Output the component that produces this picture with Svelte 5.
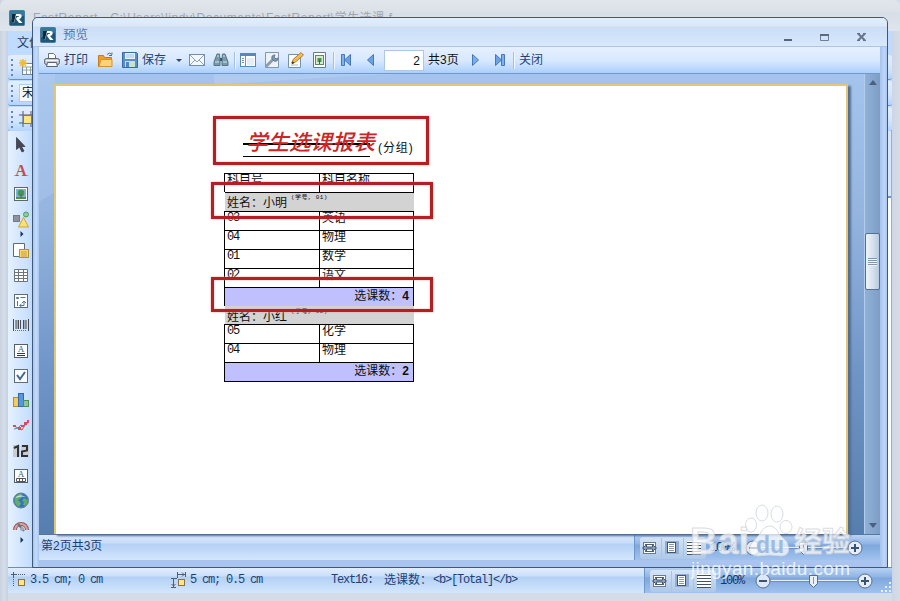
<script>
  const tools = ['pointer', 'letter', 'picture', 'shapes', 'more', 'subreport', 'grid', 'matrix', 'barcode', 'richtext', 'check', 'chart', 'spark', 'digits', 'cellular', 'globe', 'gauge', 'more'];

  const rows = [
    { kind: 'cells', a: '科目号', b: '科目名称' },
    { kind: 'group', name: '小明', no: '01' },
    { kind: 'cells', a: '03', b: '英语' },
    { kind: 'cells', a: '04', b: '物理' },
    { kind: 'cells', a: '01', b: '数学' },
    { kind: 'cells', a: '02', b: '语文' },
    { kind: 'total', n: '4' },
    { kind: 'group', name: '小红', no: '02' },
    { kind: 'cells', a: '05', b: '化学' },
    { kind: 'cells', a: '04', b: '物理' },
    { kind: 'total', n: '2' }
  ];
</script>

{#snippet icon(name)}
  <svg class="ic {name}" width="16" height="16" viewBox="0 0 16 16" fill="none">
    {#if name === 'logo'}
      <rect x=".5" y=".5" width="15" height="15" rx="1" fill="#1d5878" stroke="#4b7c9b" />
      <path d="M1 1h14v5Q7 4 1 11z" fill="#408daa" opacity=".65" />
      <path d="M4 4h6q3.500 0 2.500 2.900Q11.800 8.700 10 9L13.500 13H10L7 9 8 7h1.500q1-1-.2-1H7L5.200 12.500H3.400z" fill="#fff" />
      <path d="M3 4h4L5 12.500H3z" fill="#10283a" />
    {:else if name === 'print'}
      <path d="M4.500 7V1.500h5l2 2V7" fill="#fff" stroke="#67717c" />
      <rect x=".5" y="6.500" width="15" height="6" rx="2" fill="#c4c9d1" stroke="#5c6570" />
      <path d="M2 8.500h12" stroke="#f4f6f8" /><path d="M3.500 10.500h9l1 4h-11z" fill="#f5f8fc" stroke="#59626d" />
    {:else if name === 'folder'}
      <path d="M.5 14.500V3.500h5l1 2h7v9z" fill="#e8a02e" stroke="#c77b19" /><path d="M1 14.500l2-7h11v7z" fill="#fbd477" stroke="#d6912b" />
      <path d="M9 2.500q2-3 5 0V.5m0 3h-3" stroke="#5b6f82" />
    {:else if name === 'save'}
      <path d="M.5 .5h14l1 1v14H.5z" fill="#5a8fcb" stroke="#3a6aa5" /><rect x="3" y="1" width="10" height="6" fill="#e6f1fc" />
      <path d="M4 3h8M4 5h8" stroke="#a7c3e0" /><rect x="3" y="9" width="10" height="6" fill="#c9e3c9" /><rect x="4" y="10" width="3" height="5" fill="#4d87bf" />
    {:else if name === 'mail'}
      <rect x=".5" y="2.500" width="15" height="11" fill="#f4f8fc" stroke="#748fae" /><path d="M1 3l7 7 7-7M1 13l5-5M15 13l-5-5" stroke="#8ba2bb" />
    {:else if name === 'find'}
      <path d="M4 2h2.500l.5 5v6.500H1V10zM12 2H9.500L9 7v6.500h6V10z" fill="#789aa9" stroke="#557586" />
      <path d="M7 6h2v3H7z" fill="#38586b" /><path d="M2 10h4M10 10h4M4 4h2M10 4h2" stroke="#d5e6ed" />
    {:else if name === 'outline'}
      <rect x=".5" y="1.500" width="15" height="13" fill="#fff" stroke="#5a88b8" /><path d="M1 3h14" stroke="#5a88b8" stroke-width="2" /><path d="M5.500 4v10M2 6.500h2M2 8.500h2M2 10.500h2" stroke="#7190b2" /><path d="M7 6h7v7H7z" fill="#e4edf8" />
    {:else if name === 'setup'}
      <path d="M1.500 .5h13v15h-13z" fill="#edf2f7" stroke="#8197ae" /><path d="M3 13.500l6-6" stroke="#8b9dae" stroke-width="3" stroke-linecap="round" /><path d="M8 7q-1-4 3-4L10 5l2 2 2-1q0 4-4 3z" fill="#8599ad" stroke="#637890" />
    {:else if name === 'edit'}
      <path d="M.5 2.500h12v13H.5z" fill="#fff" stroke="#7391a9" /><path d="M3 13h7" stroke="#a6bed0" /><path d="M4 11.500l1-4 8-7 2.500 2.500-8 7z" fill="#f1bc54" stroke="#b97d2c" /><path d="M4 11.500l1.500-1.500" stroke="#44382c" stroke-width="2" />
    {:else if name === 'margins'}
      <path d="M1.500 .5h12v15h-12z" fill="#fff" stroke="#648076" /><rect x="3.500" y="3.500" width="8" height="9" fill="#d9ead4" stroke="#5b876d" /><path d="M5.500 10V6h4v4z" fill="#4e9253" /><path d="M7.500 8v4" stroke="#5e583b" />
    {:else if name === 'first' || name === 'last'}
      <g transform={name === 'last' ? 'translate(16 0) scale(-1 1)' : ''}><path d="M2.500 2.500h3v11h-3z" fill="#80b1ed" stroke="#4677b9" /><path d="M11.500 2.500v11L5.500 8z" fill="#6ba2e6" stroke="#4677b9" /></g>
    {:else if name === 'prev'}
      <path d="M11.500 2.500v11L5.500 8z" fill="#6ba2e6" stroke="#4677b9" />
    {:else if name === 'next'}
      <path d="M4.500 2.500v11l6-5.500z" fill="#7aaeea" stroke="#4677b9" />
    {:else if name === 'newreport'}
      <rect x="3.500" y="4.500" width="12" height="11" fill="#fff" stroke="#7187a1" /><path d="M4 8h12M4 11h12M7.500 8v7M11.500 8v7" stroke="#8da39c" /><path d="M4 0v8M0 4h8M1 1l6 6M7 1L1 7" stroke="#f2bb32" stroke-width="1.500" />
    {:else if name === 'align'}
      <path d="M4 0v16M12 0v16M0 4h16M0 12h16" stroke="#4e5866" /><rect x="4.500" y="4.500" width="8" height="8" fill="#ffe680" stroke="#a07722" />
    {:else if name === 'pointer'}
      <path d="M3.500 .5v12l3-2.500L9 15l2-1L8.500 9.500H12z" fill="#454852" stroke="#30323a" stroke-width=".7" />
    {:else if name === 'letter'}
      <path d="M1 13.500h5M9.500 13.500h6" stroke="#c9686f" opacity=".6" /><text x="8" y="14" text-anchor="middle" class="bigA">A</text>
    {:else if name === 'picture'}
      <rect x="1.500" y=".5" width="13" height="13" fill="#fff" stroke="#5c6670" /><rect x="3" y="2" width="10" height="10" fill="#75b5de" /><path d="M3 10h10v2H3z" fill="#569245" /><circle cx="8" cy="6" r="3.300" fill="#45974f" /><path d="M8 7v4" stroke="#7a5931" />
    {:else if name === 'shapes'}
      <rect x=".5" y="3.500" width="6" height="6" fill="#8e939b" stroke="#747982" /><circle cx="13" cy="2.500" r="2.500" fill="#91cd98" stroke="#4e9c60" /><path d="M10.500 5.500L15.500 15h-10z" fill="#ffdf77" stroke="#d1a33b" />
    {:else if name === 'more'}
      <path d="M7.500 4v6l3-3z" fill="#16355f" />
    {:else if name === 'subreport'}
      <path d="M.5 .5h11v13H.5z" fill="#fff" stroke="#626a73" /><rect x="6.500" y="6.500" width="9" height="8" fill="#fbd971" stroke="#b78e34" /><path d="M8 9h6M8 11h6M8 13h6" stroke="#a98435" stroke-width=".7" />
    {:else if name === 'grid'}
      <path d="M1.500 1.500h13v12h-13z" fill="#fff" stroke="#6c747e" /><path d="M5.500 2v11M10.500 2v11M1 4.500h13M1 7.500h13M1 10.500h13" stroke="#6c747e" />
    {:else if name === 'matrix'}
      <rect x="1.500" y="1.500" width="13" height="13" fill="#fff" stroke="#606b77" /><path d="M3.500 4.500h2v1h-2zM7.500 4.500h5M4.500 8v5M7 12.500h4V8M9 10l2-2 2 2M8.500 11l-2 1.500 2 1.500" stroke="#4d799a" />
    {:else if name === 'barcode'}
      <path d="M.5 1v12M3 2v9M5.500 2v9M7.500 2v9M10.500 2v9M13 2v9M15.500 1v12" stroke="#484d54" /><path d="M4 2v9M12 2v9" stroke="#70777f" /><path d="M2 12.500h12" stroke="#6b727a" stroke-dasharray="1 1" />
    {:else if name === 'richtext' || name === 'cellular'}
      <rect x="1.500" y="1.500" width="13" height="13" fill="#fff" stroke="#555e69" /><text x="8" y="9" text-anchor="middle" class="smallA">A</text>
      {#if name === 'richtext'}<path d="M4 10.500h8M4 12.500h8" stroke="#33383f" />{:else}<path d="M3.500 10.500h9v3h-9zM6.500 10v3M9.500 10v3" stroke="#50565d" />{/if}
    {:else if name === 'check'}
      <rect x="1.500" y="1.500" width="13" height="13" fill="#f8fafc" stroke="#626d78" /><path d="M4 7l3 4 5-7" stroke="#476790" stroke-width="2" />
    {:else if name === 'chart'}
      <rect x=".5" y="4.500" width="5" height="9" fill="#f9cc56" stroke="#bf8925" /><rect x="5.500" y=".5" width="5" height="13" fill="#5797dc" stroke="#3469a7" /><rect x="10.500" y="7.500" width="5" height="6" fill="#90c695" stroke="#4e8f59" />
    {:else if name === 'spark'}
      <path d="M1 11l4-1 3-3 3 2 4-6" stroke="#558aca" /><path d="M1 8l4 2 4 2 3-6 3-1" stroke="#d54e56" /><path d="M0 7h3v2H0zM5 9h3v3H5zM8 7h3v2H8zM11 4h3v3h-3zM14 2h2v3h-2z" fill="#d54e56" />
    {:else if name === 'digits'}
      <path d="M0 2h7v12H0zM8 2h8v12H8z" fill="#c9ccd0" /><path d="M1 5l4-2v11M9 3h5v4.500l-5 1V13h6" stroke="#303134" stroke-width="2" />
    {:else if name === 'globe'}
      <circle cx="8" cy="7.500" r="7.500" fill="#3374bd" stroke="#6c8494" /><path d="M2 4q4-4 7-3L8 5 5 7l3 3-2 4Q0 11 2 4M11 5l4 2-2 6-3-1 1-3-2-1z" fill="#62ac70" /><path d="M2 5q4-5 11-1Q8 3 2 5" fill="#fff" opacity=".65" />
    {:else if name === 'gauge'}
      <path d="M2 12a6 6 0 1 1 12 0" stroke="#8e5b60" stroke-width="4" /><path d="M2 12a6 6 0 1 1 12 0" stroke="#e0a09b" stroke-width="2" /><path d="M5 6l6 7" stroke="#68717d" stroke-width="2" /><circle cx="9" cy="11" r="2" fill="#a2a9b2" />
    {:else if name === 'pos'}
      <path d="M2.500 0v6M0 2.500h6" stroke="#555d69" /><path d="M7 2.500h8M2.500 7v8" stroke="#555d69" stroke-dasharray="1 1" /><rect x="7.500" y="7.500" width="6" height="6" fill="#ffe680" stroke="#87724b" />
    {:else if name === 'size'}
      <path d="M6.500 0v6M14.500 0v5M7 2.500h7M11 .5l2 2-2 2M0 6.500h6M2.500 7v8M.5 12l2 2 2-2M0 15.500h5" stroke="#555d69" /><rect x="7.500" y="7.500" width="6" height="6" fill="#ffe680" stroke="#87724b" />
    {/if}
  </svg>
{/snippet}

{#snippet zoomPanel()}
  <div class="zoom">
    <div class="views">
      <svg width="66" height="22" viewBox="0 0 66 22" fill="none">
        <path d="M21.500 1v20M43.500 1v20" stroke="#a9c3e3" />
        <rect x="3.500" y="5.500" width="12" height="11" fill="#fff" stroke="#647b96" /><path d="M5 7.500h9M5 14.500h9" stroke="#4c5e75" /><path d="M2.500 11l4-3v2h6V8l4 3-4 3v-2h-6v2z" fill="#8ea5c0" stroke="#40536b" />
        <path d="M25 4h14v13H25z" fill="#92aed3" /><rect x="27.500" y="5.500" width="8" height="10" fill="#fff" stroke="#42576f" /><path d="M29 7.500h5M29 9.500h5M29 11.500h5M29 13.500h5" stroke="#8796ac" />
        <path d="M47 4h14v14H47z" fill="#fff" /><path d="M47 5.500h14M47 8.500h14M47 11.500h14M47 14.500h14M47 17.500h14" stroke="#3f526a" />
      </svg>
    </div>
    <span class="pct">100%</span>
    <svg class="slider" width="122" height="20" viewBox="0 0 122 20" fill="none">
      <path d="M18 9.500h86" stroke="#e5f0ff" /><path d="M18 10.500h86" stroke="#6c8fbe" />
      <circle cx="10" cy="10" r="7" fill="#dce8f6" stroke="#547095" /><path d="M6 10h8" stroke="#3b5373" stroke-width="2" />
      <path d="M56.500 4.500h8v8l-4 4-4-4z" fill="#e8f1fb" stroke="#526e93" /><path d="M60.500 6v7" stroke="#8098b7" />
      <circle cx="112" cy="10" r="7" fill="#e4edf8" stroke="#547095" /><path d="M108 10h8M112 6v8" stroke="#3b5373" stroke-width="2" />
    </svg>
  </div>
{/snippet}

<div class="desktop">
  <header class="outer-title">{@render icon('logo')}<span>FastReport - C:\Users\lindy\Documents\FastReport\学生选课.f</span></header>
  <main class="outer-body">
    <div class="bars">
      <div class="menu">文件</div>
      <div class="bar"><i></i>{@render icon('newreport')}</div>
      <div class="bar"><i></i><b>宋体</b></div>
      <div class="bar"><i></i>{@render icon('align')}</div>
    </div>
    <div class="middle">
      <nav>{#each tools as t}<div class="tool" class:small={t === 'more'}>{@render icon(t)}</div>{/each}</nav>
      <div class="canvas"></div>
    </div>
  </main>
  <footer class="outer-status">
    <div class="where">{@render icon('pos')}<span class="mono">3.5 cm; 0 cm</span></div>
    <div class="where">{@render icon('size')}<span class="mono">5 cm; 0.5 cm</span></div>
    <div class="sel"><span class="mono">Text16:</span><span class="cn">选课数：</span><span class="mono">&lt;b&gt;[Total]&lt;/b&gt;</span></div>
    {@render zoomPanel()}
    <svg class="grip" width="12" height="12" viewBox="0 0 12 12"><path d="M9 1h2v2H9zM5 5h2v2H5zM9 5h2v2H9zM1 9h2v2H1zM5 9h2v2H5zM9 9h2v2H9z" fill="#e8f2ff" /></svg>
  </footer>

  <section class="window">
    <header class="win-title">
      {@render icon('logo')}<span>预览</span>
      <svg class="controls" width="84" height="14" viewBox="0 0 84 14" fill="none"><path d="M0 11h8" stroke="#566579" stroke-width="2" /><path d="M36.500 5.500h8v6h-8z" stroke="#6c7d94" /><path d="M36 6h9" stroke="#5b6a7e" stroke-width="2" /><path d="M74 4.500l7 7M81 4.500l-7 7" stroke="#66758b" stroke-width="2" /><path d="M73 4.500h3M79 4.500h3M73 11.500h3M79 11.500h3" stroke="#66758b" /></svg>
    </header>
    <div class="win-body">
      <div class="toolbar">
        {@render icon('print')}<span class="label">打印</span>
        {@render icon('folder')}{@render icon('save')}<span class="label">保存</span><u></u>
        {@render icon('mail')}{@render icon('find')}<s></s>
        {@render icon('outline')}{@render icon('setup')}{@render icon('edit')}{@render icon('margins')}<s></s>
        {@render icon('first')}{@render icon('prev')}
        <div class="page-no">2</div><span class="of">共3页</span>
        {@render icon('next')}{@render icon('last')}<s class="endsep"></s><span class="label">关闭</span>
      </div>
      <div class="workspace">
        <svg class="swoosh" viewBox="0 0 825 460" preserveAspectRatio="none"><path d="M0 0H240Q130 10 0 45z" transform="translate(175 -2) scale(1 .3)" fill="#b8d1f2" opacity=".5" /><path d="M0 0H16V118L0 128z" fill="#b8d1f2" opacity=".3" /></svg>
        <article class="page">
          <div class="heading"><h1>学生选课报表</h1><span>(分组)</span></div>
          <div class="table">
            {#each rows as r}
              {#if r.kind === 'cells'}
                <div class="row"><span class:num={r.a.length === 2}>{r.a}</span><span>{r.b}</span></div>
              {:else if r.kind === 'group'}
                <div class="group"><span>姓名：{r.name}</span><sup>(学号, {r.no})</sup></div>
              {:else}
                <div class="total">选课数：<b>{r.n}</b></div>
              {/if}
            {/each}
          </div>
          <div class="mark m1"></div><div class="mark m2"></div><div class="mark m3"></div>
        </article>
        <div class="scroll"><em class="up"></em><div class="thumb"><i></i></div><em class="down"></em></div>
      </div>
      <div class="win-status"><span>第2页共3页</span>{@render zoomPanel()}</div>
    </div>
  </section>

  <svg class="watermark" width="170" height="84" viewBox="0 0 170 84">
    <g fill="#fff" fill-opacity=".72" stroke="#d0d4da" stroke-opacity=".8">
      <ellipse cx="72" cy="13" rx="6" ry="8" /><ellipse cx="87" cy="14" rx="6" ry="8" />
      <ellipse cx="61" cy="25" rx="5.500" ry="7" /><ellipse cx="96" cy="27" rx="6" ry="6.500" />
      <path d="M79 26Q86 26 89 34L97 42Q102 55 92 56L79 55 68 56Q56 56 61 44L70 34Q73 27 79 26z" />
      <text x="0" y="54" class="bai" textLength="59" lengthAdjust="spacingAndGlyphs">Bai</text><text x="104" y="52" class="jy" textLength="56" lengthAdjust="spacingAndGlyphs">经验</text>
    </g>
    <text x="66" y="53" class="du">du</text>
    <text x="1" y="75" class="url" textLength="159">jingyan.baidu.com</text>
  </svg>
</div>

<style>
  :global(body) { margin: 0; overflow: hidden; }
  * { box-sizing: border-box; }
  .desktop { position: relative; width: 900px; height: 601px; display: flex; flex-direction: column; background: linear-gradient(90deg, #c9d3df, #d5dde9 4px, #c6d2e3 8px, #c6d2e3 890px, #cfd7e5 893px, #d6dde8); font: 12px/14px "Liberation Sans", "Noto Sans CJK SC", sans-serif; color: #1b3f78; }
  .ic { display: block; flex: none; overflow: visible; }
  .mono { font-family: "Liberation Mono", monospace; letter-spacing: -1.2px; white-space: pre; }
  .outer-title { height: 31px; display: flex; padding: 10px 0 0 9px; border-radius: 6px 6px 0 0; background: linear-gradient(#e1e6ec, #dce1e8 12px, #d7dee7 13px, #dfe5ec); }
  .outer-title span { margin: 0 0 0 8px; line-height: 17px; color: #a0a7b0; letter-spacing: .55px; white-space: nowrap; }
  .outer-body { flex: 1; margin: 0 8px; display: flex; flex-direction: column; background: #bfdbff; min-height: 0; }
  .bars { height: 100px; }
  .menu { height: 24px; padding: 5px 0 0 9px; color: #263d5e; }
  .bar { height: 25px; margin-bottom: 1px; border-bottom: 1px solid #6593cf; border-radius: 3px; background: linear-gradient(#e4efff, #d1e4ff 60%, #b5d3fc); display: flex; align-items: center; gap: 6px; padding-left: 3px; }
  .bar i { width: 2px; height: 17px; background: repeating-linear-gradient(#6788b6 0 2px, transparent 2px 5px); }
  .bar b { font-weight: 400; color: #111; border: 1px solid #b5cbe6; background: #f5f9ff; padding: 1px 2px; width: 60px; }
  .middle { flex: 1; display: flex; min-height: 0; }
  nav { width: 24px; padding: 1px 0 0 5px; background: linear-gradient(90deg, #e5f1ff, #c3dcfc); }
  .tool { height: 25px; display: flex; align-items: center; }
  .tool.small { height: 6px; }
  .bigA { font: bold 16px "Liberation Serif", serif; fill: #c54c55; }
  .smallA { font: 9px "Liberation Serif", serif; fill: #345e8a; }
  .canvas { flex: 1; background: linear-gradient(90deg, transparent 859px, #8fb1dc 859px), linear-gradient(#d8e8fc 65px, #6d94c4 65px 67px, #fdfefe 67px); }
  .outer-status { height: 34px; padding: 0 0 8px; margin: 0 8px; border-top: 1px solid #6c8fae; display: flex; background: linear-gradient(#e3edfc, #cadffa 8px, #b3d0f5 9px, #d4e6fd 25px, #d4dce8 25px); position: relative; }
  .where { display: flex; gap: 3px; padding: 4px 0 0 3px; width: 160px; line-height: 16px; }
  .sel { flex: 1; display: flex; line-height: 24px; white-space: nowrap; padding-left: 3px; }
  .cn { margin: 0 1px 0 11px; }
  .zoom { width: 248px; height: 25px; flex: none; display: flex; align-items: center; border-left: 1px solid #6f96c9; background: linear-gradient(#b8d1f3, #8fb4e4 9px, #7fa7dc 10px, #a0c2ee); }
  .views { height: 22px; margin-left: 5px; border-radius: 3px; background: linear-gradient(#d5e4f6, #aec8e8); }
  .views svg { display: block; }
  .pct { width: 29px; margin-left: 4px; font: 12px "Liberation Mono", monospace; letter-spacing: -1.2px; color: #16356a; }
  .slider { margin-left: 4px; }
  .grip { position: absolute; right: 0; bottom: 8px; }

  .window { position: absolute; left: 32px; top: 17px; width: 856px; height: 551px; border: 1px solid #3c597c; border-radius: 6px 6px 0 0; background: linear-gradient(90deg, #a7c4ed, #c5dcfb 3px, #a9c5ef 6px, #a9c5ef 848px, #bed5f7 851px, #acc8f1); overflow: hidden; display: flex; flex-direction: column; }
  .win-title { height: 29px; display: flex; align-items: center; padding-left: 7px; color: #5b76a8; background: linear-gradient(#e4edf8, #dbe8f8 8px, #cbdef6 9px, #d9e8fa 28px); border-bottom: 1px solid #a8c5e6; flex: none; padding-top: 6px; }
  .win-title span { margin-left: 7px; font-size: 12.500px; }
  .controls { margin-left: auto; margin-right: 19px; margin-top: 2px; }
  .win-body { margin: 0 7px 7px 6px; flex: 1; display: flex; flex-direction: column; min-height: 0; }
  .toolbar { height: 27px; flex: none; display: flex; align-items: center; padding-left: 5px; border-bottom: 1px solid #7198ce; background: linear-gradient(#e6f0ff, #d7e8ff 14px, #abcffc); white-space: nowrap; }
  .label { color: #1f4376; width: 25px; margin-left: 4px; }
  .folder { margin-left: 9px; }
  .save, .find, .setup, .edit, .margins { margin-left: 8px; }
  .toolbar u { margin: 1px 0 0 9px; border: 3px solid transparent; border-top: 3px solid #294875; border-bottom: 0; }
  .mail { margin-left: 7px; }
  .toolbar s { width: 2px; height: 17px; margin-left: 5px; background: #f2f7ff; border-left: 1px solid #a2bfe5; }
  .outline { margin-left: 4px; }
  .first { margin-left: 4px; }
  .prev { margin-left: 7px; }
  .page-no { width: 40px; height: 21px; margin-left: 6px; padding: 3px 3px 0; border: 1px solid #adc8e7; background: #fff; color: #111; text-align: right; }
  .of { width: 36px; margin-left: 4px; color: #111; }
  .next { margin-left: 4px; }
  .last { margin-left: 7px; }
  .toolbar .endsep { margin-left: 6px; }
  .workspace { flex: 1; min-height: 0; position: relative; display: flex; background: linear-gradient(#a5c4ed, #95b5df 30%, #6f95c7 65%, #567eae); }
  .swoosh { position: absolute; left: 0; top: 0; width: 825px; height: 460px; }
  .page { position: relative; width: 794px; margin: 10px 0 0 15px; border: 2px solid #e3c778; border-bottom: 0; background: #fff; box-shadow: 3px 2px 2px #526f91; color: #101010; }
  .heading { height: 87px; display: flex; }
  h1 { position: relative; z-index: 0; margin: 41px 0 0 190px; width: 132px; height: 29px; font: italic 500 21.500px/28px "Noto Sans CJK SC", sans-serif; color: #cb2525; white-space: nowrap; }
  h1::before { content: ""; position: absolute; z-index: -1; left: -3px; top: 16px; width: 127px; height: 11px; border-top: 2px solid #000; border-bottom: 1px solid #000; }
  .heading span { margin: 55px 0 0; white-space: nowrap; letter-spacing: .9px; }
  .table { width: 190px; margin-left: 168px; border-bottom: 1px solid #000; }
  .row { height: 19px; display: flex; border: 1px solid #000; border-bottom: 0; }
  .row span { line-height: 13px; padding-left: 2px; flex: 1; }
  .row span:first-child { flex: 0 0 94px; }
  .row span:last-child { border-left: 1px solid #000; }
  .row .num { font-family: "Liberation Mono", monospace; letter-spacing: -1.2px; line-height: 12px; }
  .group { height: 19px; margin: 0 0 0 1px; padding-left: 2px; display: flex; background: #d3d3d3; line-height: 22px; }
  .row + .group { border-top: 1px solid #000; line-height: 20px; }
  .total + .group { height: 18px; }
  .group sup { font: 6px/8px "Liberation Mono", "Noto Sans CJK SC", monospace; margin: 1px 0 0 4px; letter-spacing: .4px; white-space: nowrap; }
  .total + .group sup { margin-top: 2px; }
  .total { height: 19px; border: 1px solid #000; border-bottom: 0; background: #c0c0ff; text-align: right; line-height: 17px; padding-right: 4px; }
  .total b { font-size: 12px; }
  .mark { position: absolute; border: 3px solid #b51f23; box-shadow: 0 0 2px #e7a2a2, inset 0 0 2px #e7a2a2; }
  .m1 { left: 157px; top: 30px; width: 216px; height: 49px; }
  .m2 { left: 155px; top: 96px; width: 222px; height: 37px; }
  .m3 { left: 155px; top: 191px; width: 222px; height: 35px; }
  .scroll { position: relative; width: 16px; margin-left: auto; border-left: 1px solid #b3cdef; background: linear-gradient(90deg, #90b0d8, #7d9dc5); display: flex; flex-direction: column; align-items: center; }
  .scroll em { border: 4px solid transparent; }
  .scroll .up { border-bottom: 5px solid #49617f; border-top: 0; margin-top: 6px; }
  .scroll .down { border-top: 5px solid #49617f; border-bottom: 0; margin: auto 0 6px; }
  .thumb { width: 15px; height: 57px; margin-top: 148px; border: 1px solid #536f92; border-radius: 2px; background: linear-gradient(90deg, #edf3fa, #d7e2ef 50%, #b8c9de); padding: 24px 2px; }
  .thumb i { display: block; height: 8px; background: repeating-linear-gradient(#8297ae 0 1px, #eef4fa 1px 2px); }
  .win-status { height: 26px; flex: none; display: flex; justify-content: space-between; line-height: 22px; padding-left: 2px; border-top: 1px solid #54779e; background: linear-gradient(#dbe9fc, #c8dcf8 8px, #b3d0f5 9px, #d4e6fd); }
  .win-status .zoom { width: 246px; }
  .watermark { position: absolute; left: 690px; top: 500px; }
  .bai { font: bold 36px "Liberation Sans", sans-serif; }
  .jy { font: bold 28px "Noto Sans CJK SC", sans-serif; }
  .du { font: bold 23px "Liberation Sans", sans-serif; fill: #9dbbe2; }
  .url { font: 19px "Liberation Sans", sans-serif; fill: #fff; fill-opacity: .8; }
</style>
